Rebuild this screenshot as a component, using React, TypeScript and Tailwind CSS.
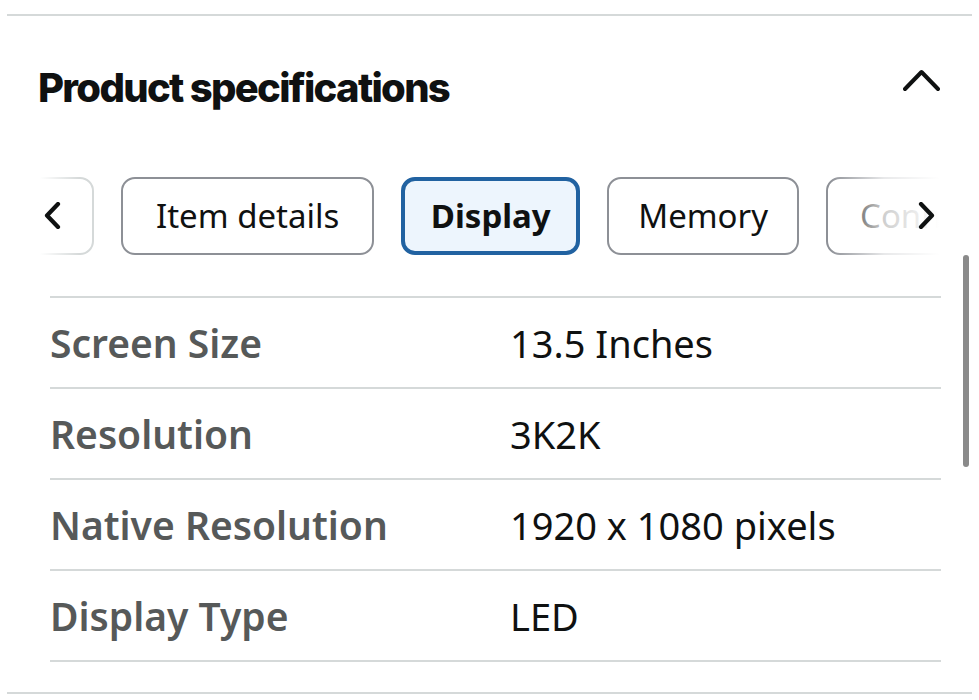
const specs = [
  { label: 'Screen Size', value: '13.5 Inches' },
  { label: 'Resolution', value: '3K2K' },
  { label: 'Native Resolution', value: '1920 x 1080 pixels' },
  { label: 'Display Type', value: 'LED' },
];

function Chevron({ dir, className }: { dir: 'up' | 'left' | 'right'; className?: string }) {
  if (dir === 'up') {
    return (
      <svg className={className} width="37" height="24" viewBox="0 0 37 24" fill="none">
        <path d="M2 21 L18.5 4 L35 21" stroke="#0f1111" strokeWidth="4" strokeLinecap="round" strokeLinejoin="round" />
      </svg>
    );
  }
  const d = dir === 'left' ? 'M14 2 L3 13.5 L14 25' : 'M3 2 L14 13.5 L3 25';
  return (
    <svg className={className} width="17" height="27" viewBox="0 0 17 27" fill="none">
      <path d={d} stroke="#0f1111" strokeWidth="4.2" strokeLinecap="round" strokeLinejoin="round" />
    </svg>
  );
}

export default function App() {
  return (
    <div className="relative h-[700px] w-[979px] overflow-hidden bg-white font-['Noto_Sans',sans-serif]">
      <div className="pt-[14px] px-[7px]">
        <div className="h-[2px] bg-[#d5d9d9]" />
      </div>

      {/* header */}
      <div className="flex h-[142px] items-center justify-between pl-[38px] pr-[39px]">
        <h2 className="font-['Inter',sans-serif] text-[40px] font-extrabold tracking-[-1.7px] text-[#0f1111] leading-none pt-[2px]">
          Product specifications
        </h2>
        <Chevron dir="up" className="mb-[14px]" />
      </div>

      {/* tabs */}
      <div className="relative mx-[40px] mt-[18px] h-[80px] overflow-hidden">
        <div className="flex h-full items-center gap-[27px] ml-[-30px]">
          <div className="h-[78px] w-[84px] shrink-0 rounded-[14px] border-2 border-[#d5d9d9]" />
          <div className="flex h-[78px] shrink-0 items-center rounded-[14px] border-2 border-[#8d9096] px-[33px] text-[33px] text-[#0f1111]">
            Item details
          </div>
          <div className="flex h-[78px] shrink-0 items-center rounded-[14px] border-[4px] border-[#2162a1] bg-[#edf5fd] px-[25.5px] text-[33px] font-bold text-[#0f1111]">
            Display
          </div>
          <div className="flex h-[78px] shrink-0 items-center rounded-[14px] border-2 border-[#8d9096] px-[29px] text-[33px] text-[#0f1111]">
            Memory
          </div>
          <div className="flex h-[78px] shrink-0 items-center rounded-[14px] border-2 border-[#8d9096] px-[32px] text-[33px] text-[#0f1111]">
            Connectivity
          </div>
        </div>
        <div className="absolute inset-y-0 left-0 w-[40px] bg-gradient-to-r from-white to-white/0" />
        <div className="absolute inset-y-0 right-0 w-[110px] bg-gradient-to-l from-white via-white/80 to-white/0" />
        <Chevron dir="left" className="absolute left-[4px] top-[26px]" />
        <Chevron dir="right" className="absolute right-[4px] top-[26px]" />
      </div>

      {/* table */}
      <div className="mt-[40px] ml-[50px] mr-[38px] border-t-2 border-[#d5d9d9]">
        {specs.map((s) => (
          <div key={s.label} className="flex h-[91px] items-center border-b-2 border-[#d5d9d9] pt-[2px]">
            <div className="w-[460px] text-[39px] font-semibold text-[#565959]">{s.label}</div>
            <div className="text-[38px] text-[#0f1111]">{s.value}</div>
          </div>
        ))}
      </div>

      <div className="mt-[30px] px-[7px]">
        <div className="h-[2px] bg-[#d5d9d9]" />
      </div>

      {/* scrollbar */}
      <div className="absolute left-[963px] top-[255px] h-[212px] w-[6px] rounded-full bg-[#8a8a8a]" />
    </div>
  );
}
